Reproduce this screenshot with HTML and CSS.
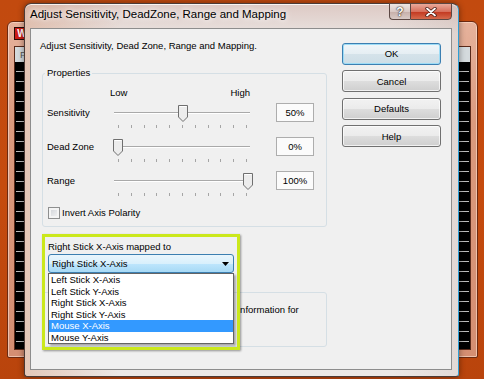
FILE: index.html
```html
<!DOCTYPE html>
<html lang="en">
<head>
    <meta charset="UTF-8">
    <meta name="viewport" content="width=device-width, initial-scale=1.0">
    <title>Adjust Sensitivity, DeadZone, Range and Mapping</title>
    <link rel="stylesheet" href="styles.css">
</head>
<body>
    <div class="desktop">
        <!-- window behind the dialog -->
        <div class="backwin">
            <div class="backwin-title"><span class="app-icon">W</span></div>
            <div class="backwin-body">
                <div class="backwin-tabs">P</div>
                <div class="backwin-track"></div>
            </div>
        </div>

        <div class="dialog">
            <div class="titlebar">
                <span class="title">Adjust Sensitivity, DeadZone, Range and Mapping</span>
                <div class="caption-buttons">
                    <span class="cap-btn cap-help">?</span>
                    <span class="cap-btn cap-close">
                        <svg width="12" height="10" viewBox="0 0 12 10">
                            <path d="M2 1.5l8 7M10 1.5l-8 7" stroke="#4a1a12" stroke-width="3.4" stroke-linecap="round"/>
                            <path d="M2 1.5l8 7M10 1.5l-8 7" stroke="#fff" stroke-width="1.8" stroke-linecap="round"/>
                        </svg>
                    </span>
                </div>
            </div>

            <div class="client">
                <div class="main-col">
                    <p class="intro">Adjust Sensitivity, Dead Zone, Range and Mapping.</p>

                    <fieldset class="group">
                        <legend>Properties</legend>
                        <div class="scale-labels"><span>Low</span><span>High</span></div>

                        <div class="slider-row">
                            <span class="slider-label">Sensitivity</span>
                            <div class="slider">
                                <div class="track"></div>
                                <svg class="thumb" style="left: 64px" width="10" height="17" viewBox="0 0 10 17"><path d="M0.5 0.5h9v11.5l-4.5 4.5-4.5-4.5z" fill="#ececec" stroke="#6f6f6f"/><path d="M1.5 1.5h7" stroke="#fff"/></svg>
                            </div>
                            <span class="value-box">50%</span>
                            <div class="ticks"><i></i><i></i><i></i><i></i><i></i><i></i><i></i><i></i><i></i><i></i><i></i></div>
                        </div>

                        <div class="slider-row">
                            <span class="slider-label">Dead Zone</span>
                            <div class="slider">
                                <div class="track"></div>
                                <svg class="thumb" style="left: -1px" width="10" height="17" viewBox="0 0 10 17"><path d="M0.5 0.5h9v11.5l-4.5 4.5-4.5-4.5z" fill="#ececec" stroke="#6f6f6f"/><path d="M1.5 1.5h7" stroke="#fff"/></svg>
                            </div>
                            <span class="value-box">0%</span>
                            <div class="ticks"><i></i><i></i><i></i><i></i><i></i><i></i><i></i><i></i><i></i><i></i><i></i></div>
                        </div>

                        <div class="slider-row">
                            <span class="slider-label">Range</span>
                            <div class="slider">
                                <div class="track"></div>
                                <svg class="thumb" style="left: 129px" width="10" height="17" viewBox="0 0 10 17"><path d="M0.5 0.5h9v11.5l-4.5 4.5-4.5-4.5z" fill="#ececec" stroke="#6f6f6f"/><path d="M1.5 1.5h7" stroke="#fff"/></svg>
                            </div>
                            <span class="value-box">100%</span>
                            <div class="ticks"><i></i><i></i><i></i><i></i><i></i><i></i><i></i><i></i><i></i><i></i><i></i></div>
                        </div>

                        <label class="check-row"><span class="checkbox"></span>Invert Axis Polarity</label>
                    </fieldset>

                    <div class="mapping">
                        <div class="mapping-label">Right Stick X-Axis mapped to</div>
                        <div class="combo">
                            <span>Right Stick X-Axis</span>
                            <svg width="7" height="4" viewBox="0 0 7 4"><path d="M0 0h7l-3.5 4z" fill="#000"/></svg>
                        </div>

                        <ul class="dropdown">
                            <li>Left Stick X-Axis</li>
                            <li>Left Stick Y-Axis</li>
                            <li>Right Stick X-Axis</li>
                            <li>Right Stick Y-Axis</li>
                            <li class="selected">Mouse X-Axis</li>
                            <li>Mouse Y-Axis</li>
                        </ul>

                        <div class="info-group">
                            <span class="info-text">information for</span>
                        </div>

                        <div class="highlight"></div>
                    </div>
                </div>

                <div class="button-col">
                    <button class="btn btn-default">OK</button>
                    <button class="btn">Cancel</button>
                    <button class="btn">Defaults</button>
                    <button class="btn">Help</button>
                </div>
            </div>
        </div>
    </div>
</body>
</html>
```

FILE: styles.css
```css
body {
    margin: 0;
    font-family: "Liberation Sans", Arial, sans-serif;
    font-size: 9.5px;
    color: #000;
}

.desktop {
    position: relative;
    width: 484px;
    height: 379px;
    overflow: hidden;
    background: linear-gradient(to bottom, #c24a0f, #c54b0e 50%, #b9440c);
}

/* window behind */
.backwin {
    position: absolute;
    left: 7px;
    top: 21px;
    width: 471px;
    height: 337px;
    box-sizing: border-box;
    border: 1px solid #6b2a12;
    border-radius: 6px 6px 2px 2px;
    background: linear-gradient(to bottom, #e6b29c, #da9a7e 30%, #d48e72);
    box-shadow: inset 0 0 0 1px rgba(255, 225, 210, 0.6);
    padding: 0 6px 7px;
    display: flex;
    flex-direction: column;
}

.backwin-title {
    height: 24px;
    padding-top: 5px;
    box-sizing: border-box;
}

.app-icon {
    display: inline-block;
    width: 14px;
    height: 11px;
    background: #cc1b14;
    border: 1px solid #2a0a06;
    color: #fff;
    font: bold 10px/11px "Liberation Sans", Arial, sans-serif;
    text-align: center;
}

.backwin-body {
    flex: 1;
    display: flex;
    flex-direction: column;
    background: #000;
    border: 1px solid #5a2a1a;
}

.backwin-tabs {
    height: 15px;
    line-height: 15px;
    padding-left: 5px;
    background: #d4dadd;
    color: #555;
}

.backwin-track {
    flex: 1;
    margin: 0 1px;
    background: repeating-linear-gradient(to bottom, transparent 0, transparent 9px, #bcbcbc 9px, #bcbcbc 10px);
}

/* dialog */
.dialog {
    position: absolute;
    left: 24px;
    top: 3px;
    width: 435px;
    height: 374px;
    box-sizing: border-box;
    border: 1px solid #4b3a36;
    border-right-color: #2f9fd6;
    border-radius: 7px 7px 3px 3px;
    background:
        linear-gradient(to right, rgba(214, 140, 100, 0.35), transparent 22%, transparent 85%, rgba(150, 110, 100, 0.12)),
        linear-gradient(to bottom, #ddc9c4, #e9e2df 30px, #ece8e6);
    box-shadow: 0 0 6px rgba(0, 0, 0, 0.45), inset 0 1px 0 rgba(255, 255, 255, 0.8);
    display: flex;
    flex-direction: column;
}

.titlebar {
    height: 24px;
    flex: none;
    display: flex;
    align-items: flex-start;
    padding: 0 6px 0 5px;
}

.title {
    flex: 1;
    margin-top: 3px;
    font-size: 11.5px;
    line-height: 14px;
    text-shadow: 0 0 5px #fff, 0 0 8px #fff;
}

.caption-buttons {
    display: flex;
    margin-top: -1px;
}

.cap-btn {
    height: 17px;
    box-sizing: border-box;
    border: 1px solid #5c4844;
    display: flex;
    align-items: center;
    justify-content: center;
}

.cap-help {
    width: 21px;
    border-right: none;
    border-radius: 0 0 0 4px;
    background: linear-gradient(to bottom, #eee6e3, #dac9c5 50%, #c6aea8 51%, #d9cac6);
    color: #fff;
    font: bold 12px/1 "Liberation Sans", Arial, sans-serif;
    text-shadow: 0 0 2px #2a1a16, 0 0 1px #000;
}

.cap-close {
    width: 42px;
    border-radius: 0 0 4px 0;
    background: linear-gradient(to bottom, #eaa99a, #d8705c 50%, #c2361e 51%, #d66a4c);
}

.client {
    flex: none;
    height: 342px;
    margin: 0 6px 0 5px;
    box-sizing: border-box;
    border: 1px solid #8d8d8d;
    background: #f0f0f0;
    display: flex;
    gap: 15px;
    padding: 10px 10px 0 9px;
}

.main-col {
    width: 287px;
}

.intro {
    margin: 0;
    line-height: 13px;
}

.group {
    margin: 15px 0 0 2px;
    width: 285px;
    box-sizing: border-box;
    padding: 0 4px 7px 2px;
    border: 1px solid #d5dfe5;
    border-radius: 3px;
}

.group legend {
    padding: 0 2px;
    line-height: 12px;
}

.scale-labels {
    display: flex;
    justify-content: space-between;
    width: 140px;
    margin: 8px 0 4px 65px;
    line-height: 12px;
}

.slider-row {
    display: grid;
    grid-template-columns: 69px 136px 26px 38px;
    grid-template-rows: 19px 15px;
    align-items: center;
}

.slider-label {
    padding-left: 2px;
}

.slider {
    grid-column: 2;
    grid-row: 1;
    position: relative;
    height: 19px;
}

.track {
    margin-top: 9px;
    border-top: 1px solid #a9a9a9;
    border-bottom: 1px solid #fff;
}

.thumb {
    position: absolute;
    top: 2px;
}

.value-box {
    grid-column: 4;
    grid-row: 1;
    height: 19px;
    box-sizing: border-box;
    border: 1px solid #adadad;
    background: #fbfbfb;
    display: flex;
    align-items: center;
    justify-content: center;
}

.ticks {
    grid-column: 2;
    grid-row: 2;
    align-self: start;
    width: 129px;
    height: 3px;
    margin: 3px 0 0 4px;
    display: flex;
    justify-content: space-between;
}

.ticks i {
    width: 1px;
    background: #a5a5a5;
}

.check-row {
    display: flex;
    align-items: center;
    gap: 2px;
    height: 13px;
    margin: 1px 0 0 3px;
}

.checkbox {
    width: 12px;
    height: 12px;
    box-sizing: border-box;
    border: 1px solid #8e8f8f;
    background: linear-gradient(135deg, #cdd0d5, #f7f7f7);
    box-shadow: inset 0 0 0 2px #f4f4f4;
}

/* mapping section */
.mapping {
    position: relative;
    padding-top: 14px;
}

.mapping-label {
    margin-left: 8px;
    line-height: 12px;
}

.combo {
    margin: 1px 0 0 8px;
    width: 186px;
    height: 19px;
    box-sizing: border-box;
    border: 1px solid #3c7fb1;
    border-radius: 3px;
    background: linear-gradient(to bottom, #eaf6fd, #d9f0fc 50%, #bee6fd 51%, #a7d9f5);
    display: flex;
    align-items: center;
    justify-content: space-between;
    padding: 0 4px 0 3px;
}

.dropdown {
    position: absolute;
    left: 8px;
    top: 46px;
    z-index: 2;
    width: 186px;
    margin: 0;
    padding: 0;
    list-style: none;
    box-sizing: border-box;
    border: 1px solid #646464;
    background: #fff;
    box-shadow: 2px 2px 2px rgba(0, 0, 0, 0.3);
}

.dropdown li {
    height: 11.5px;
    line-height: 11.5px;
    padding-left: 2px;
}

.dropdown .selected {
    background: #3399ff;
    color: #fff;
}

.info-group {
    margin: 19px 0 0 2px;
    width: 285px;
    height: 55px;
    box-sizing: border-box;
    border: 1px solid #d5dfe5;
    border-radius: 3px;
    padding: 10px 0 0 195px;
    line-height: 13px;
}

.highlight {
    position: absolute;
    left: 2px;
    top: 7px;
    z-index: 3;
    width: 198px;
    height: 116px;
    box-sizing: border-box;
    border: 3px solid #cbe81c;
    box-shadow: 1px 1px 2px rgba(0, 0, 0, 0.4);
}

/* buttons */
.button-col {
    width: 99px;
    padding-top: 3.5px;
    display: flex;
    flex-direction: column;
    gap: 5.5px;
}

.btn {
    height: 22px;
    padding: 0;
    box-sizing: border-box;
    border: 1px solid #707070;
    border-radius: 3px;
    background: linear-gradient(to bottom, #f2f2f2, #ebebeb 50%, #dddddd 51%, #cfcfcf);
    box-shadow: inset 0 0 0 1px rgba(255, 255, 255, 0.7);
    font: inherit;
    color: #000;
}

.btn-default {
    border-color: #3c7fb1;
    background: linear-gradient(to bottom, #f0f6f9, #e5eef3 50%, #d5e3ea 51%, #cddde6);
    box-shadow: inset 0 0 0 1px #9ddcf6;
}
```
